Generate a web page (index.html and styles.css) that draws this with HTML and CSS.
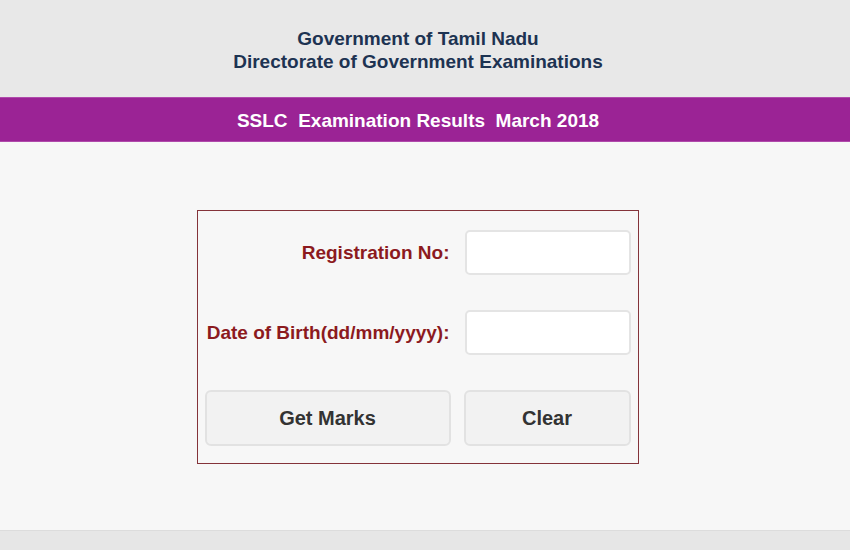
FILE: index.html
```html
<!DOCTYPE html>
<html lang="en">
<head>
   <meta charset="UTF-8">
   <meta name="viewport" content="width=device-width, initial-scale=1.0">
   <title>SSLC Examination Results March 2018</title>
   <link rel="stylesheet" href="styles.css">
</head>
<body>
   <div class="header">
      <div>Government of Tamil Nadu</div>
      <div>Directorate of Government Examinations</div>
   </div>
   <div class="title-bar">SSLC&nbsp; Examination Results&nbsp; March 2018</div>

   <div class="main">
      <form class="result-form">
         <label class="label" for="regno">Registration No:</label>
         <input class="field" type="text" id="regno">

         <label class="label" for="dob">Date of Birth(dd/mm/yyyy):</label>
         <input class="field" type="text" id="dob">

         <button type="button" class="btn">Get Marks</button>
         <button type="reset" class="btn">Clear</button>
      </form>
   </div>

   <div class="footer"></div>
</body>
</html>
```

FILE: styles.css
```css
body {
   margin: 0;
   padding: 0;
   height: 100vh;
   display: flex;
   flex-direction: column;
   font-family: "Liberation Sans", Arial, sans-serif;
   background-color: #f7f7f7;
}

.header {
   background-color: #e8e8e8;
   color: #1d3352;
   text-align: center;
   font-weight: bold;
   font-size: 19px;
   line-height: 23px;
   padding: 27px 14px 24px 0;
}

.title-bar {
   background-color: #9b2395;
   color: #fff;
   text-align: center;
   font-weight: bold;
   font-size: 19px;
   height: 45px;
   line-height: 45px;
   padding-right: 14px;
   border-top: 1px solid #b04aab;
   border-bottom: 1px solid #b04aab;
   box-sizing: border-box;
}

.main {
   flex: 1;
   display: flex;
   justify-content: center;
   align-items: flex-start;
   padding: 68px 15px 0 0;
}

.result-form {
   display: grid;
   grid-template-columns: 246px 167px;
   column-gap: 13px;
   row-gap: 35px;
   align-items: center;
   padding: 19px 7px 17px;
   border: 1px solid #84333a;
   background-color: #f7f7f7;
}

.label {
   text-align: right;
   color: #8c1a1e;
   font-weight: bold;
   font-size: 19px;
   padding-right: 1px;
}

.field {
   box-sizing: border-box;
   width: 166px;
   height: 45px;
   margin-left: 1px;
   border: 2px solid #e4e4e4;
   border-radius: 5px;
   background-color: #fff;
   font-size: 16px;
}

.btn {
   height: 56px;
   border: 2px solid #e2e2e2;
   border-radius: 6px;
   background-color: #f2f2f2;
   color: #333;
   font-family: inherit;
   font-weight: bold;
   font-size: 20px;
}

.footer {
   height: 19px;
   background-color: #e6e6e6;
   border-top: 1px solid #dcdcdc;
}
```
